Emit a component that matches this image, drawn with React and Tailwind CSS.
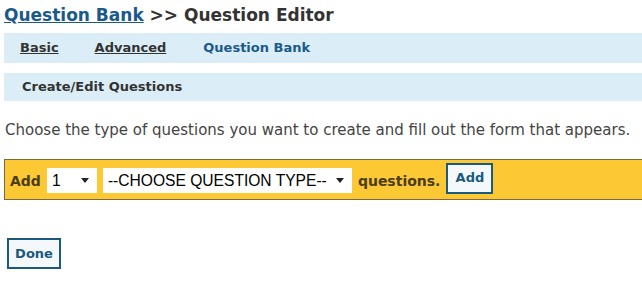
import React from "react";

const Caret = () => (
  <svg width="8" height="5" viewBox="0 0 8 5" className="shrink-0">
    <path d="M0 0 L8 0 L4 5 Z" fill="#222" />
  </svg>
);

const Select = ({ value, className }) => (
  <div
    className={
      "flex h-[25px] items-center justify-between bg-white pl-[5px] pr-[8px] font-['Liberation_Sans',Arial,sans-serif] text-[15.6px] text-black " +
      className
    }
  >
    <span>{value}</span>
    <Caret />
  </div>
);

export default function App() {
  return (
    <div className="h-[282px] w-[642px] overflow-hidden bg-white font-['DejaVu_Sans',Verdana,sans-serif] text-[#333]">
      <h1 className="pl-[4px] pt-[3px] text-[17px] font-bold leading-[24px]">
        <a className="text-[#1a5a8a] underline">Question Bank</a>
        <span> &gt;&gt; Question Editor</span>
      </h1>

      <div className="ml-[4px] mt-[6px] flex h-[30px] items-center bg-[#dbedf6] pl-[16px] text-[13px] font-bold">
        <a className="text-[#333] underline">Basic</a>
        <a className="ml-[36px] text-[#333] underline">Advanced</a>
        <a className="ml-[37px] text-[#1a5a8a]">Question Bank</a>
      </div>

      <div className="ml-[4px] mt-[10px] flex h-[28px] items-center bg-[#dbedf6] pl-[18px] text-[13px] font-bold">
        Create/Edit Questions
      </div>

      <p className="mt-[20px] pl-[5px] text-[15px] leading-[18px] text-[#444]">
        Choose the type of questions you want to create and fill out the form that appears.
      </p>

      <div className="ml-[4px] mt-[20px] flex h-[41px] items-center border-y border-l border-[#7a6a3e] bg-[#fcc934] pl-[5px]">
        <span className="mt-[3px] text-[14px] font-bold text-[#4a3c1c]">Add</span>
        <Select value="1" className="ml-[6px] mt-[2px] w-[50px]" />
        <Select value="--CHOOSE QUESTION TYPE--" className="ml-[6px] mt-[2px] w-[249px]" />
        <span className="ml-[6px] mt-[3px] text-[14px] font-bold text-[#4a3c1c]">questions.</span>
        <button className="mb-[3px] ml-[6px] h-[31px] w-[47px] border-2 border-[#1a5a7e] bg-[#f4f8fa] text-[13px] font-bold text-[#1a5a7e]">
          Add
        </button>
      </div>

      <button className="ml-[7px] mt-[38px] h-[31px] w-[54px] border-2 border-[#1a5a7e] bg-[#f4f8fa] text-[13px] font-bold text-[#1a5a7e]">
        Done
      </button>
    </div>
  );
}
